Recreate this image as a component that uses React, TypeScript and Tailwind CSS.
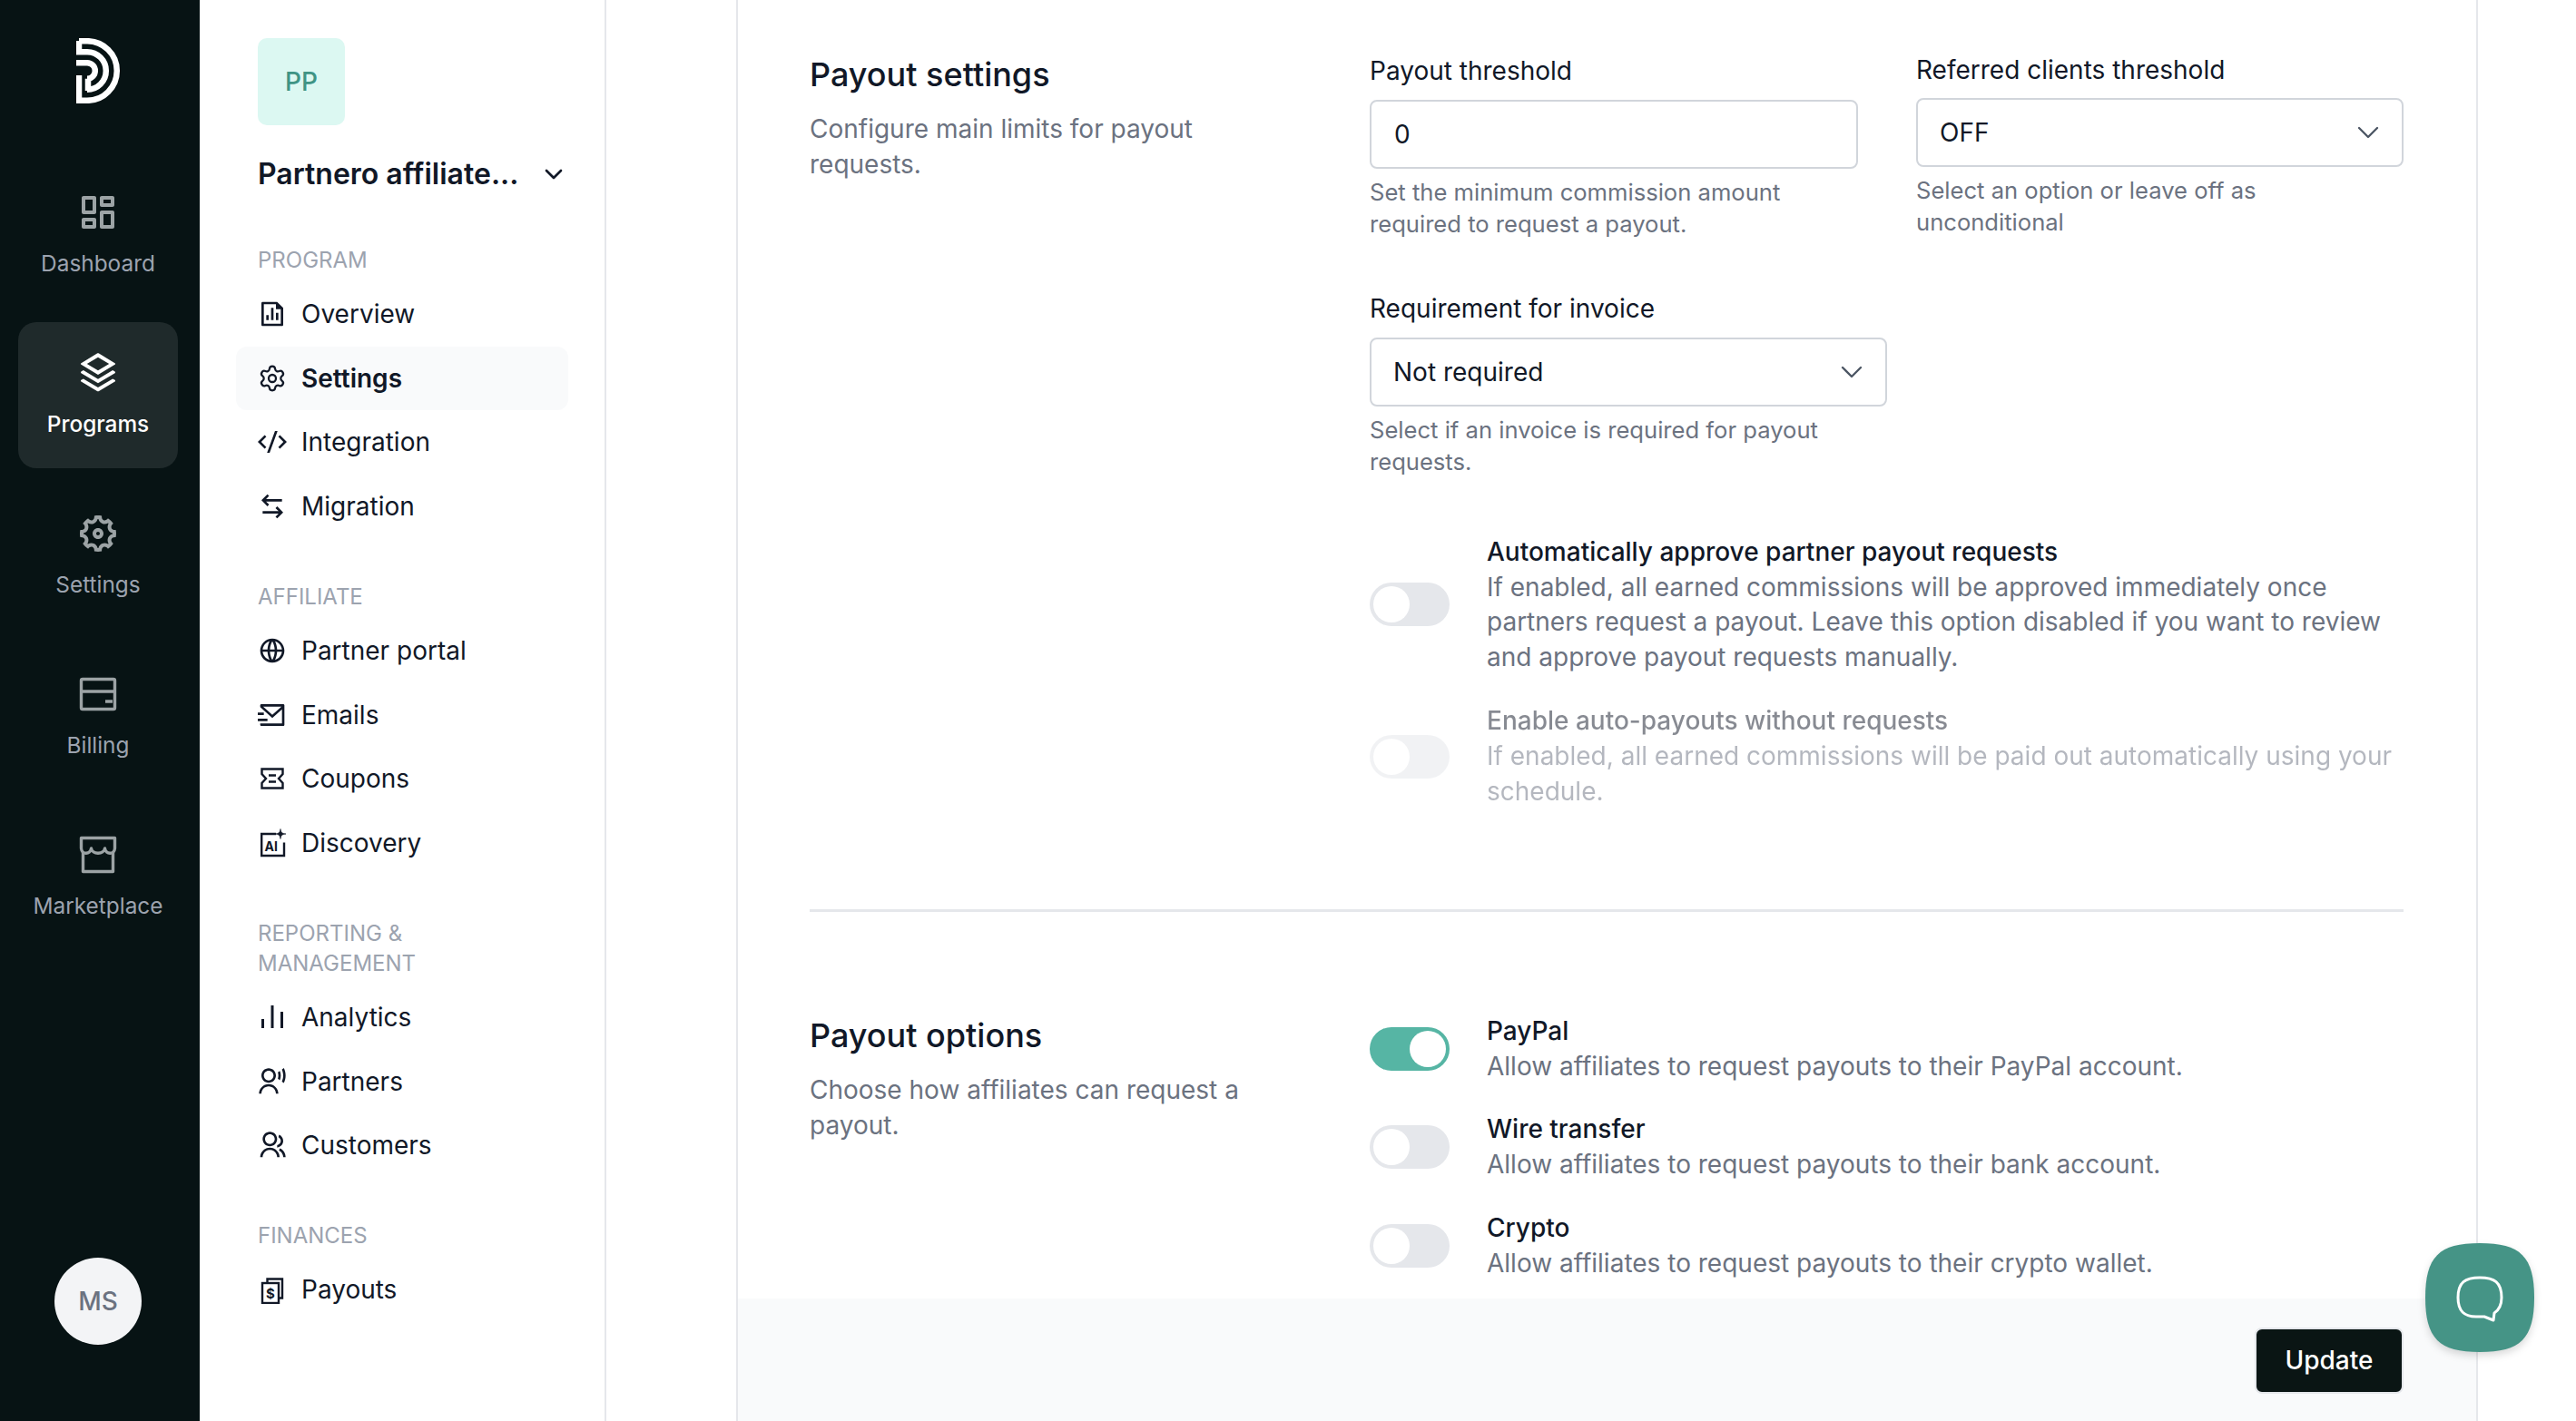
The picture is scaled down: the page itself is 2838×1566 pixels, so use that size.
import type { ReactNode } from "react";
import { ChevronDown, Settings } from "lucide-react";
import {
  RiArrowLeftRightLine,
  RiCodeSSlashLine,
  RiDashboardLine,
  RiFileChartLine,
  RiGlobalLine,
  RiGroupLine,
  RiMailSendLine,
  RiSettings5Line,
  RiStackLine,
  RiUserVoiceLine,
} from "react-icons/ri";

function Logo() {
  return (
    <svg viewBox="0 0 49 72" className="w-[49px] h-[72px]" fill="none" stroke="#fff" strokeWidth="6.5">
      <path d="M3 3.2H12A32.8 32.8 0 0 1 12 68.8H3V41" />
      <path d="M3 3V18.5M3 15.2H12A20.8 20.8 0 0 1 12 56.8" />
      <path d="M0 27.2H12A8.8 8.8 0 0 1 12 44.8H13V58" />
    </svg>
  );
}

function BillingIcon() {
  return (
    <svg viewBox="0 0 48 48" className="w-12 h-12" fill="none" stroke="currentColor" strokeWidth="3.4">
      <rect x="5.5" y="7.5" width="37" height="33" rx="1.5" />
      <path d="M5.5 21H42.5M32 32H40" />
    </svg>
  );
}

function StoreIcon() {
  return (
    <svg viewBox="0 0 48 48" className="w-12 h-12" fill="none" stroke="currentColor" strokeWidth="3.4" strokeLinejoin="round">
      <path d="M5.5 17V5.5H42.5V17C42 24 32.5 24 31.5 17 30.5 24 17.5 24 16.5 17 15.5 24 6 24 5.5 17Z" />
      <path d="M7.5 21V42.5H40.5V21" />
    </svg>
  );
}

function CouponIcon() {
  return (
    <svg viewBox="0 0 32 32" className="w-8 h-8 text-[#111827]" fill="none" stroke="currentColor" strokeWidth="2.4">
      <path d="M4.5 5.5H27.5V11L23 16 27.5 21V26.5H4.5V21L9 16 4.5 11Z" />
      <path d="M12 12.5H20M12 19.5H20" />
    </svg>
  );
}

function AnalyticsIcon() {
  return (
    <svg viewBox="0 0 32 32" className="w-8 h-8 text-[#111827]" fill="currentColor">
      <rect x="4" y="18" width="3" height="10" />
      <rect x="14.5" y="3" width="3" height="25" />
      <rect x="25" y="10" width="3" height="18" />
    </svg>
  );
}

function DiscoveryIcon() {
  return (
    <svg viewBox="0 0 32 32" className="w-8 h-8 text-[#111827]" fill="none" stroke="currentColor">
      <path d="M20 6H4.2V30H29V15.5" strokeWidth="2.4" />
      <path d="M25 0.5C25.6 4.5 26.5 5.4 31 6 26.5 6.6 25.6 7.5 25 11.5 24.4 7.5 23.5 6.6 19 6 23.5 5.4 24.4 4.5 25 0.5Z" fill="currentColor" strokeWidth="0.6" />
      <text x="7.5" y="25" fontFamily="Inter, sans-serif" fontWeight="700" fontSize="14" fill="currentColor" stroke="none">AI</text>
    </svg>
  );
}

function PayoutsIcon() {
  return (
    <svg viewBox="0 0 32 32" className="w-8 h-8 text-[#111827]" fill="none" stroke="currentColor" strokeWidth="2.4">
      <path d="M10.5 8V4.5H27V25.5H23" />
      <rect x="5" y="9" width="18" height="22" />
      <text x="14" y="26" textAnchor="middle" fontFamily="Inter, sans-serif" fontWeight="700" fontSize="15" fill="currentColor" stroke="none">$</text>
    </svg>
  );
}

function RailItem({ icon, label, active }: { icon: ReactNode; label: string; active?: boolean }) {
  return (
    <div className={`w-[176px] h-[161px] rounded-[20px] flex flex-col items-center pt-[32px] ${active ? "bg-[#1f2a2b] text-white" : "text-[#9ca3a5]"}`}>
      <div className="h-12 flex items-center justify-center text-[48px]">{icon}</div>
      <span className={`mt-[17px] text-[24.4px] leading-[30px] ${active ? "text-white font-medium" : "text-[#9ca3af]"}`}>{label}</span>
    </div>
  );
}

function NavItem({ icon, label, active }: { icon: ReactNode; label: string; active?: boolean }) {
  return (
    <div className={`h-[70.6px] rounded-[12px] flex items-center gap-4 px-6 text-[28px] text-[#111827] ${active ? "bg-[#f9fafb] font-semibold" : ""}`}>
      <span className="w-8 h-8 flex items-center justify-center text-[32px] shrink-0">{icon}</span>
      <span>{label}</span>
    </div>
  );
}

function NavSection({ title, className, children }: { title: string; className: string; children: ReactNode }) {
  return (
    <div className={className}>
      <div className="px-6 mb-2 text-[24px] leading-[33px] text-[#9ca3af]">{title}</div>
      {children}
    </div>
  );
}

function Toggle({ on }: { on?: boolean }) {
  return (
    <div className={`w-[88px] h-[48px] rounded-full p-1 flex shrink-0 ${on ? "bg-[#56b5a4] justify-end" : "bg-[#e5e7eb] justify-start"}`}>
      <div className="w-10 h-10 rounded-full bg-white" />
    </div>
  );
}

function ToggleRow({ title, desc, on }: { title: string; desc: ReactNode; on?: boolean }) {
  return (
    <div className="flex items-center gap-[41px]">
      <Toggle on={on} />
      <div className="text-[28px] leading-[38.9px]">
        <div className="text-[#111827] font-medium">{title}</div>
        <div className="text-[#6b7280]">{desc}</div>
      </div>
    </div>
  );
}

function SelectBox({ value }: { value: string }) {
  return (
    <div className="h-[76px] rounded-[8px] border-2 border-[#d1d5db] bg-white flex items-center justify-between pl-[24px] pr-[17px] text-[28px] text-[#111827]">
      <span>{value}</span>
      <ChevronDown size={40} strokeWidth={1.4} className="text-[#4b5563]" />
    </div>
  );
}

function Help({ children }: { children: ReactNode }) {
  return <p className="mt-2 text-[25.6px] leading-[35.4px] text-[#6b7280]">{children}</p>;
}

function SectionIntro({ title, desc, className }: { title: string; desc: ReactNode; className: string }) {
  return (
    <div className={`w-[617px] shrink-0 ${className}`}>
      <h2 className="text-[36px] leading-[44px] font-medium text-[#111827]">{title}</h2>
      <p className="mt-[19px] text-[28px] leading-[38.9px] text-[#6b7280]">{desc}</p>
    </div>
  );
}

export default function App() {
  return (
    <div className="relative h-[1566px] flex overflow-hidden bg-white font-[Inter,sans-serif]">
      <aside className="w-[220px] shrink-0 bg-[#071314] flex flex-col items-center pt-[42px] pr-[4px]">
        <Logo />
        <nav className="mt-[64px] flex flex-col gap-4">
          <RailItem icon={<RiDashboardLine />} label="Dashboard" />
          <RailItem icon={<RiStackLine />} label="Programs" active />
          <RailItem icon={<RiSettings5Line />} label="Settings" />
          <RailItem icon={<BillingIcon />} label="Billing" />
          <RailItem icon={<StoreIcon />} label="Marketplace" />
        </nav>
        <div className="mt-auto mb-[84px] w-24 h-24 rounded-full bg-[#f3f4f6] flex items-center justify-center text-[28px] font-medium text-[#6b7280]">MS</div>
      </aside>

      <aside className="w-[448px] shrink-0 border-r-2 border-[#e5e7eb] pt-[42px] px-[40px]">
        <div className="px-6">
          <div className="w-24 h-24 rounded-[10px] bg-[#dcf8f2] flex items-center justify-center text-[28px] font-medium text-[#3f9485]">PP</div>
          <div className="mt-[32px] h-[44px] flex items-center justify-between text-[32px] font-semibold text-[#111827]">
            <span>Partnero affiliate...</span>
            <ChevronDown size={32} strokeWidth={2} className="mr-[-24px]" />
          </div>
        </div>
        <NavSection title="PROGRAM" className="mt-[56px]">
          <NavItem icon={<RiFileChartLine />} label="Overview" />
          <NavItem icon={<Settings size={34} strokeWidth={1.7} />} label="Settings" active />
          <NavItem icon={<RiCodeSSlashLine />} label="Integration" />
          <NavItem icon={<RiArrowLeftRightLine />} label="Migration" />
        </NavSection>
        <NavSection title="AFFILIATE" className="mt-[47.5px]">
          <NavItem icon={<RiGlobalLine />} label="Partner portal" />
          <NavItem icon={<RiMailSendLine />} label="Emails" />
          <NavItem icon={<CouponIcon />} label="Coupons" />
          <NavItem icon={<DiscoveryIcon />} label="Discovery" />
        </NavSection>
        <NavSection title="REPORTING & MANAGEMENT" className="mt-[47.5px]">
          <NavItem icon={<AnalyticsIcon />} label="Analytics" />
          <NavItem icon={<RiUserVoiceLine />} label="Partners" />
          <NavItem icon={<RiGroupLine />} label="Customers" />
        </NavSection>
        <NavSection title="FINANCES" className="mt-[47.5px]">
          <NavItem icon={<PayoutsIcon />} label="Payouts" />
        </NavSection>
      </aside>

      <main className="flex-1 pl-[143px]">
        <div className="w-[1919px] h-full border-x-2 border-[#e5e7eb] flex flex-col">
          <div className="flex-1 min-h-0 overflow-hidden pl-[79px] pr-[80px]">
            <section className="flex pt-[56px]">
              <SectionIntro
                title="Payout settings"
                desc={<>Configure main limits for payout<br />requests.</>}
                className="pt-[4px]"
              />
              <div className="flex-1">
                <div className="flex gap-[64px]">
                  <div className="w-[538px] pt-px">
                    <label className="block h-[42px] mb-[11px] text-[28px] leading-[42px] text-[#111827]">Payout threshold</label>
                    <div className="h-[76px] rounded-[8px] border-2 border-[#d1d5db] flex items-center px-[25px] text-[28px] text-[#111827]">0</div>
                    <Help>Set the minimum commission amount required to request a payout.</Help>
                  </div>
                  <div className="w-[537px]">
                    <label className="block h-[42px] mb-[10px] text-[28px] leading-[42px] text-[#111827]">Referred clients threshold</label>
                    <SelectBox value="OFF" />
                    <Help>Select an option or leave off as unconditional</Help>
                  </div>
                </div>
                <div className="w-[570px] mt-[54px]">
                  <label className="block h-[42px] mb-[11px] text-[28px] leading-[42px] text-[#111827]">Requirement for invoice</label>
                  <SelectBox value="Not required" />
                  <Help>Select if an invoice is required for payout requests.</Help>
                </div>
                <div className="mt-[62px] flex flex-col gap-[31px]">
                  <ToggleRow
                    title="Automatically approve partner payout requests"
                    desc="If enabled, all earned commissions will be approved immediately once partners request a payout. Leave this option disabled if you want to review and approve payout requests manually."
                  />
                  <div className="opacity-50">
                    <ToggleRow
                      title="Enable auto-payouts without requests"
                      desc="If enabled, all earned commissions will be paid out automatically using your schedule."
                    />
                  </div>
                </div>
              </div>
            </section>

            <div className="mt-[110px] h-[3px] bg-[#e5e7eb]" />

            <section className="flex mt-[112px]">
              <SectionIntro
                title="Payout options"
                desc={<>Choose how affiliates can request a<br />payout.</>}
                className="pt-[2px]"
              />
              <div className="flex-1 flex flex-col gap-[30.7px]">
                <ToggleRow title="PayPal" desc="Allow affiliates to request payouts to their PayPal account." on />
                <ToggleRow title="Wire transfer" desc="Allow affiliates to request payouts to their bank account." />
                <ToggleRow title="Crypto" desc="Allow affiliates to request payouts to their crypto wallet." />
              </div>
            </section>
          </div>

          <div className="h-[135px] shrink-0 bg-[#f9fafb] flex items-center justify-end pr-[80px]">
            <button className="w-[164px] h-[73px] mt-px rounded-[8px] border-2 border-[#e5e7eb] bg-[#0a1514] text-white text-[28px] font-medium">Update</button>
          </div>
        </div>
      </main>

      <div className="absolute right-[46px] bottom-[76px] w-[120px] h-[120px] drop-shadow-lg">
        <svg viewBox="0 0 120 120" className="w-full h-full" fill="none">
          <path d="M60 0C105 0 120 15 120 60S105 120 60 120 0 105 0 60 15 0 60 0Z" fill="#459486" />
          <path d="M60 38C44 38 36 43 36 60 36 76 44 81 56 81H65L75 85 76 77C82 73 84 68 84 60 84 43 76 38 60 38Z" stroke="#fff" strokeWidth="3" strokeLinejoin="round" />
        </svg>
      </div>
    </div>
  );
}
